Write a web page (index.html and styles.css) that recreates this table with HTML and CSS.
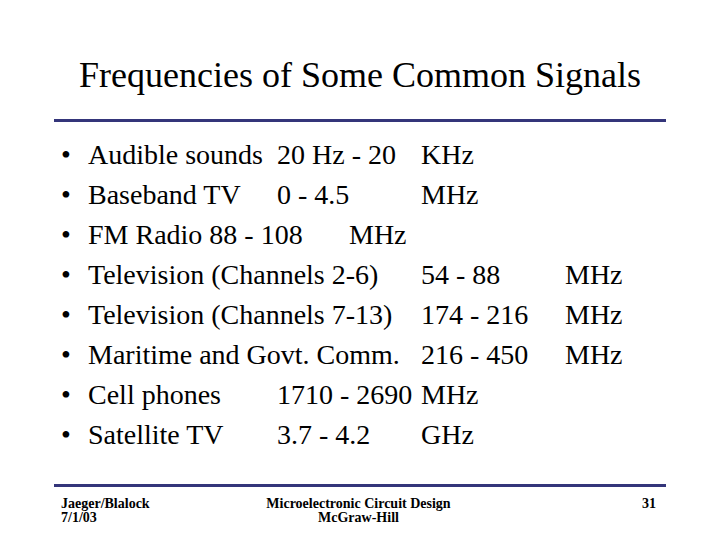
FILE: index.html
```html
<!DOCTYPE html>
<html>
<head>
<meta charset="utf-8">
<link rel="stylesheet" href="styles.css">
</head>
<body>
<div class="slide">
  <h1 class="title">Frequencies of Some Common Signals</h1>
  <div class="rule top-rule"></div>
  <ul class="items">
    <li>Audible sounds&#9;20 Hz - 20&#9;KHz</li>
    <li>Baseband TV&#9;0 - 4.5&#9;MHz</li>
    <li>FM Radio 88 - 108&#9;MHz</li>
    <li>Television (Channels 2-6)&#9;54 - 88&#9;MHz</li>
    <li>Television (Channels 7-13)&#9;174 - 216&#9;MHz</li>
    <li>Maritime and Govt. Comm.&#9;216 - 450&#9;MHz</li>
    <li>Cell phones&#9;1710 - 2690&#9;MHz</li>
    <li>Satellite TV&#9;3.7 - 4.2&#9;GHz</li>
  </ul>
  <div class="rule bottom-rule"></div>
  <footer class="footer">
    <div class="f-left">Jaeger/Blalock<br>7/1/03</div>
    <div class="f-center">Microelectronic Circuit Design<br>McGraw-Hill</div>
    <div class="f-right">31</div>
  </footer>
</div>
</body>
</html>
```
FILE: styles.css
```css
html, body {
  margin: 0;
  padding: 0;
  background: #ffffff;
}
.slide {
  width: 720px;
  height: 540px;
  overflow: hidden;
  font-family: "Liberation Serif", "Times New Roman", serif;
  color: #000;
  display: flex;
  flex-direction: column;
}
.title {
  margin: 53px 0 0 0;
  font-size: 36px;
  font-weight: normal;
  line-height: 44px;
  height: 44px;
  text-align: center;
}
.rule {
  height: 3px;
  margin-left: 54px;
  width: 612px;
  background: #34357a;
}
.top-rule {
  margin-top: 22px;
}
.items {
  list-style: none;
  margin: 12.5px 0 0 0;
  padding: 0 0 0 61px;
  font-size: 28px;
  line-height: 40px;
}
.items li {
  white-space: pre;
  tab-size: 72px;
  -moz-tab-size: 72px;
}
.items li::before {
  content: "\2022";
  display: inline-block;
  width: 27px;
}
.bottom-rule {
  margin-top: 29.5px;
}
.footer {
  display: grid;
  grid-template-columns: 1fr auto 1fr;
  padding: 10px 64px 0 61px;
  font-size: 14px;
  font-weight: bold;
  line-height: 14px;
}
.f-center {
  text-align: center;
}
.f-right {
  text-align: right;
}
```
